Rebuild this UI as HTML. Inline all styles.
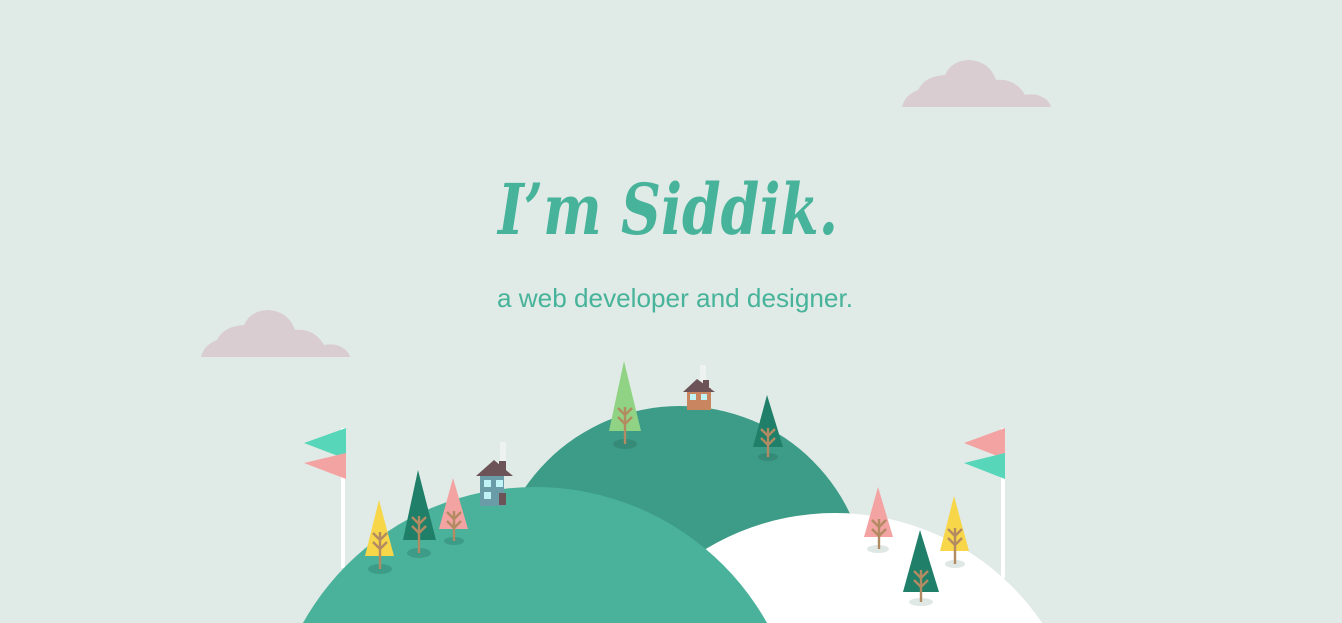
<!DOCTYPE html>
<html><head><meta charset="utf-8"><style>
html,body{margin:0;padding:0;background:#e0eae6;overflow:hidden;width:1342px;height:623px}
svg{display:block}
</style></head><body>
<svg width="1342" height="623" viewBox="0 0 1342 623" xmlns="http://www.w3.org/2000/svg">
<defs>
<g id="br"><path d="M0 8l-7-7M0 8l7-7M0 17l-7-7M0 17l7-7" stroke="#b38b62" stroke-width="2.4" fill="none"/></g>
</defs>
<rect width="1342" height="623" fill="#e0eae6"/>
<g fill="#d9cdd2">
<path d="M902 107 Q905 95 918 90 Q925 76 945 75 Q952 60 970 60 Q990 62 996 80 Q1015 78 1025 95 Q1036 93 1042 97 Q1049 100 1051 107Z"/>
<path d="M201 357 Q204 345 217 340 Q224 326 244 325 Q251 310 269 310 Q289 312 295 330 Q314 328 324 345 Q335 343 341 347 Q348 350 350 357Z"/>
</g>
<text x="668" y="234" text-anchor="middle" font-family="'DejaVu Serif','Liberation Serif',serif" font-style="italic" font-weight="bold" font-size="70" fill="#47b39a" textLength="340" lengthAdjust="spacingAndGlyphs">I’m Siddik.</text>
<text x="675" y="307" text-anchor="middle" font-family="'Liberation Sans',sans-serif" font-size="26" fill="#47b39a" textLength="356" lengthAdjust="spacingAndGlyphs">a web developer and designer.</text>
<rect x="341" y="428" width="4" height="140" fill="#fff"/>
<polygon points="304,443 346,428 346,459" fill="#57d6b9"/>
<polygon points="304,463 346,453 346,479" fill="#f4a3a3"/>
<rect x="1001" y="428" width="4" height="150" fill="#fff"/>
<polygon points="964,443 1005,428 1005,459" fill="#f4a3a3"/>
<polygon points="964,463 1005,453 1005,479" fill="#57d6b9"/>
<circle cx="680" cy="594" r="188" fill="#3d9c87"/>
<rect x="700" y="365" width="6" height="16" fill="#f4f7f6" opacity="0.7"/>
<rect x="687" y="388" width="24" height="22" fill="#c98560"/>
<polygon points="683,392 697,379 715,392" fill="#6b5358"/>
<rect x="703" y="380" width="6" height="8" fill="#6b5358"/>
<rect x="690" y="394" width="6" height="6" fill="#bff3f5"/><rect x="701" y="394" width="6" height="6" fill="#bff3f5"/>
<ellipse cx="625" cy="444" rx="12" ry="5" fill="#358b77"/>
<polygon points="624,361 609,431 641,431" fill="#91d384"/>
<line x1="625" y1="407" x2="625" y2="444" stroke="#b38b62" stroke-width="2.4"/><use href="#br" x="625" y="407"/>
<ellipse cx="768" cy="457" rx="10" ry="4" fill="#358b77"/>
<polygon points="767,395 753,447 783,447" fill="#1f7f68"/>
<line x1="768" y1="428" x2="768" y2="457" stroke="#b38b62" stroke-width="2.4"/><use href="#br" x="768" y="428"/>
<circle cx="835" cy="763" r="250" fill="#ffffff"/>
<ellipse cx="878" cy="549" rx="11" ry="4" fill="#dfe8e5"/>
<polygon points="878,487 864,537 893,537" fill="#f4a3a3"/>
<line x1="879" y1="519" x2="879" y2="549" stroke="#b38b62" stroke-width="2.4"/><use href="#br" x="879" y="519"/>
<ellipse cx="955" cy="564" rx="10" ry="4" fill="#dfe8e5"/>
<polygon points="954,496 940,551 969,551" fill="#f7d64a"/>
<line x1="955" y1="528" x2="955" y2="564" stroke="#b38b62" stroke-width="2.4"/><use href="#br" x="955" y="528"/>
<ellipse cx="921" cy="602" rx="12" ry="4" fill="#dfe8e5"/>
<polygon points="920,530 903,592 939,592" fill="#1f7f68"/>
<line x1="921" y1="570" x2="921" y2="602" stroke="#b38b62" stroke-width="2.4"/><use href="#br" x="921" y="570"/>
<circle cx="535" cy="753" r="266" fill="#4ab29a"/>
<rect x="500" y="442" width="6" height="20" fill="#f4f7f6" opacity="0.7"/>
<rect x="480" y="476" width="24" height="30" fill="#6a9ca8"/>
<polygon points="476,476 494,460 513,476" fill="#6b5358"/>
<rect x="499" y="461" width="7" height="10" fill="#6b5358"/>
<rect x="484" y="480" width="7" height="7" fill="#bff3f5"/><rect x="496" y="480" width="7" height="7" fill="#bff3f5"/>
<rect x="484" y="492" width="7" height="7" fill="#bff3f5"/><rect x="499" y="493" width="7" height="12" fill="#6b5358"/>
<ellipse cx="380" cy="569" rx="12" ry="5" fill="#3d9c87"/>
<polygon points="379,500 365,556 394,556" fill="#f7d64a"/>
<line x1="380" y1="532" x2="380" y2="569" stroke="#b38b62" stroke-width="2.4"/><use href="#br" x="380" y="532"/>
<ellipse cx="419" cy="553" rx="12" ry="5" fill="#3d9c87"/>
<polygon points="418,470 403,540 436,540" fill="#1f7f68"/>
<line x1="419" y1="516" x2="419" y2="553" stroke="#b38b62" stroke-width="2.4"/><use href="#br" x="419" y="516"/>
<ellipse cx="454" cy="541" rx="10" ry="4" fill="#3d9c87"/>
<polygon points="453,478 439,529 468,529" fill="#f4a3a3"/>
<line x1="454" y1="511" x2="454" y2="541" stroke="#b38b62" stroke-width="2.4"/><use href="#br" x="454" y="511"/>
</svg>
</body></html>
